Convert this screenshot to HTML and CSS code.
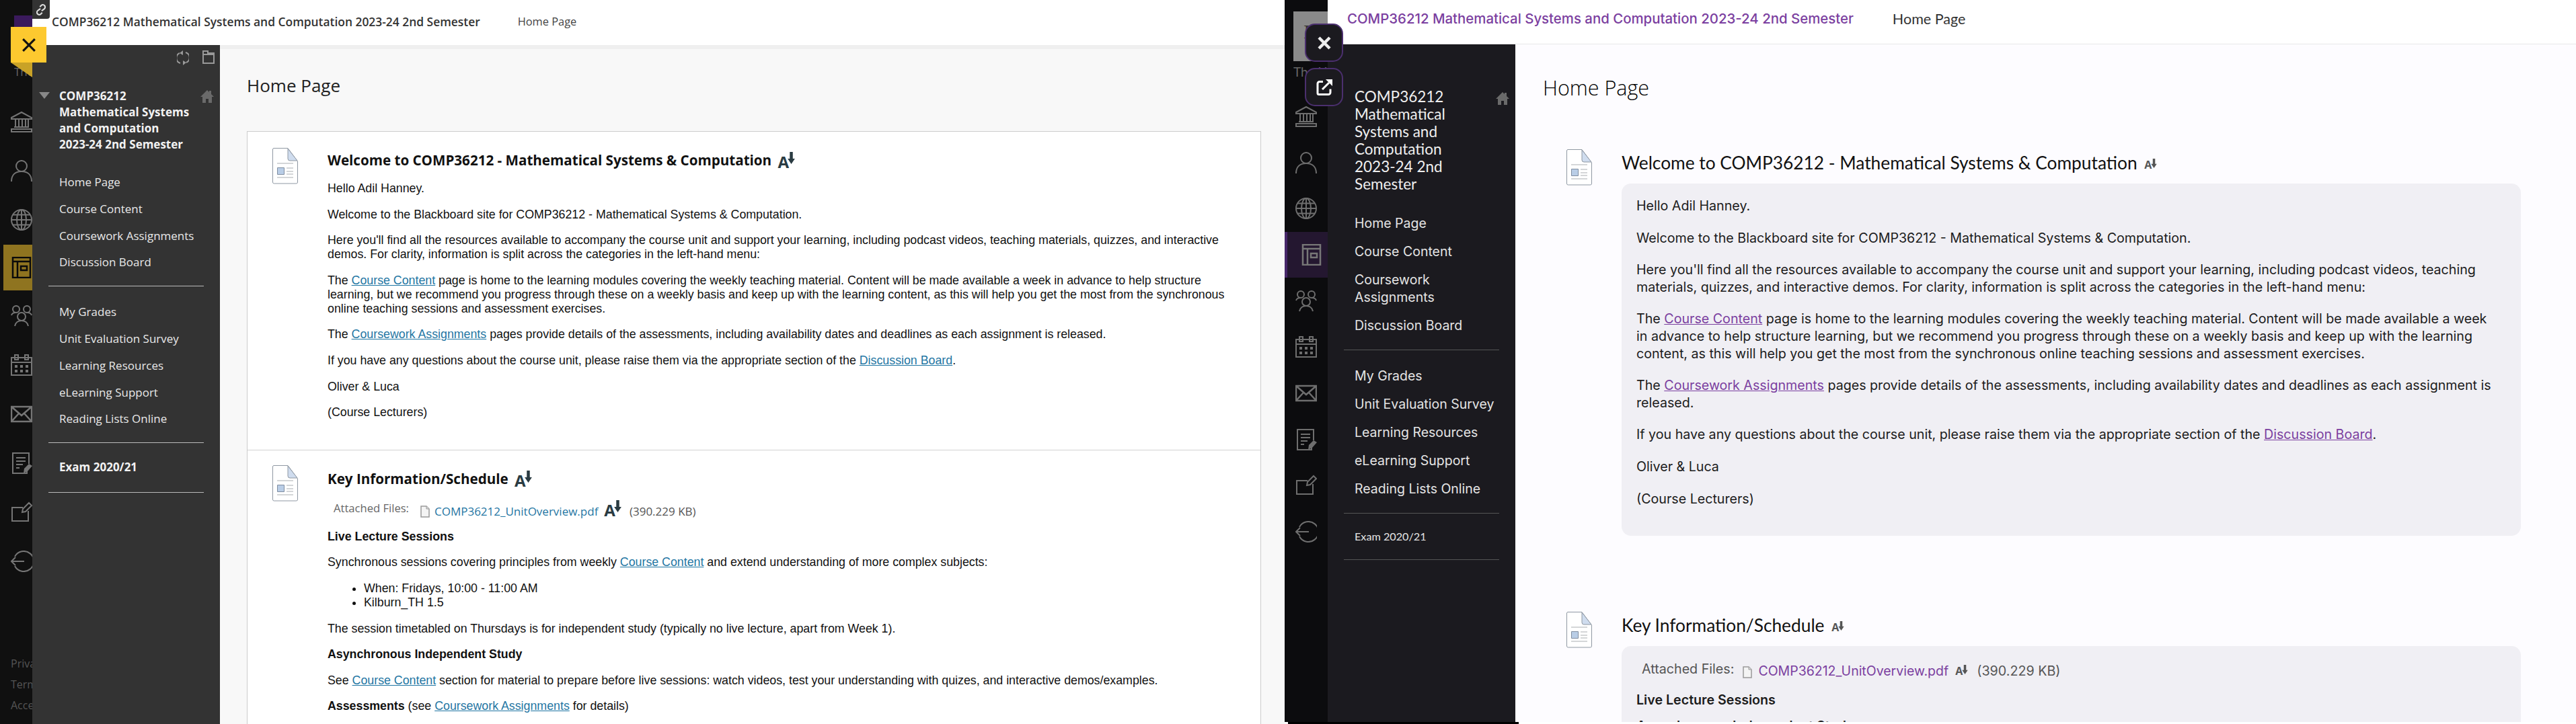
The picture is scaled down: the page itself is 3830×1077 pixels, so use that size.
FILE: index.html
```html
<!DOCTYPE html>
<html lang="en">
<head>
<meta charset="utf-8">
<title>COMP36212 Home Page</title>
<link rel="stylesheet" href="styles.css">
</head>
<body>
<svg class="sprite" xmlns="http://www.w3.org/2000/svg" aria-hidden="true">
  <symbol id="i-bank" viewBox="0 0 32 32"><path d="M1 10 16 2l15 8v2H1zM3 31h26M1 27h30v4H1zM5 24h22M7 13v10M12 13v10M17 13v10M22 13v10M26 13v10" fill="none" stroke="currentColor" stroke-width="2"/></symbol>
  <symbol id="i-person" viewBox="0 0 32 32"><circle cx="16" cy="9" r="8" fill="none" stroke="currentColor" stroke-width="2"/><path d="M1 32c0-10 6-15 15-15s15 5 15 15" fill="none" stroke="currentColor" stroke-width="2"/></symbol>
  <symbol id="i-globe" viewBox="0 0 32 32"><g fill="none" stroke="currentColor" stroke-width="2"><circle cx="16" cy="16" r="15"/><ellipse cx="16" cy="16" rx="7" ry="15"/><path d="M16 1v30M1 16h30M3 8.500h26M3 23.500h26"/></g></symbol>
  <symbol id="i-book" viewBox="0 0 32 32"><g fill="none" stroke="currentColor" stroke-width="2.500"><path d="M3 1h26v30H3zM3 7h26M10 7v24"/><path d="M15 14h9v6h-9z"/></g></symbol>
  <symbol id="i-group" viewBox="0 0 32 32"><g fill="none" stroke="currentColor" stroke-width="2"><circle cx="8" cy="6" r="5"/><circle cx="24" cy="6" r="5"/><circle cx="16" cy="17" r="6"/><path d="M1 15c1-3 3-4 6-4M31 15c-1-3-3-4-6-4M6 31c1-5 5-8 10-8s9 3 10 8"/></g></symbol>
  <symbol id="i-cal" viewBox="0 0 32 32"><g fill="none" stroke="currentColor" stroke-width="2"><path d="M1 5h30v26H1zM1 12h30M6 1h5v7H6zM21 1h5v7h-5z"/></g><path d="M6 16h4v4H6zM14 16h4v4h-4zM22 16h4v4h-4zM6 23h4v4H6zM14 23h4v4h-4zM22 23h4v4h-4z" fill="currentColor"/></symbol>
  <symbol id="i-mail" viewBox="0 0 32 32"><path d="M1 5h30v22H1zM1 5l15 13L31 5M1 27l11-12M31 27 20 15" fill="none" stroke="currentColor" stroke-width="2.500"/></symbol>
  <symbol id="i-note" viewBox="0 0 32 32"><path d="M24 22v9H3V1h24v16M8 8h14M8 13h14M8 18h10M8 23h5" fill="none" stroke="currentColor" stroke-width="2"/><path d="M19 31l1-7 7-7 5 3-7 8z" fill="currentColor"/></symbol>
  <symbol id="i-edit" viewBox="0 0 32 32"><path d="M26 14v15H2V9h16M17 16l1-5L27 2l4 4-9 9z" fill="none" stroke="currentColor" stroke-width="2"/></symbol>
  <symbol id="i-out" viewBox="0 0 32 32"><path d="M6 9a15 15 0 1 1 0 14M1 16h19M7 10l-6 6 6 6" fill="none" stroke="currentColor" stroke-width="2"/></symbol>
  <symbol id="i-home" viewBox="0 0 20 20"><path d="M10 1 0 11h3v9h5v-6h4v6h5v-9h3l-4-4V2h-3v2z" fill="currentColor"/></symbol>
  <symbol id="i-refresh" viewBox="0 0 18 22"><path d="M4 4a8 8 0 0 0 1 15M14 18a8 8 0 0 0-1-15" fill="none" stroke="currentColor" stroke-width="2"/><path d="M9 0v7L4 4zM9 22v-7l5 3z" fill="currentColor"/></symbol>
  <symbol id="i-folder" viewBox="0 0 18 20"><path d="M1 1h7v3h9v15H1zM1 6h16" fill="none" stroke="currentColor" stroke-width="2"/></symbol>
  <symbol id="i-page" viewBox="0 0 38 54">
    <path d="M2 .500h21L37.500 20v31a2 2 0 0 1-2 2H2.500a2 2 0 0 1-2-2V2a2 2 0 0 1 1.500-1.500z" fill="#fff" stroke="#8f98a3"/>
    <path d="M23 1v15a3 3 0 0 0 3 3h11z" fill="#cfdcee" stroke="#8f98a3"/>
    <path d="M7 23h24M7 44h24M21 30h10M21 35h10M21 39h10" stroke="#c6c9cc" stroke-width="1.500"/>
    <path d="M7.500 29.500h10v10h-10z" fill="#b9cde6" stroke="#7f8da0"/>
  </symbol>
  <symbol id="i-file" viewBox="0 0 14 18"><path d="M1 1h8l4 4v12H1z" fill="#f4f4f4" stroke="#999" stroke-width="1.500"/><path d="M9 1v4h4" fill="#ddd" stroke="#999"/></symbol>
  <symbol id="i-arrow" viewBox="0 0 12 20"><path d="M3.500 0h5v11H12l-6 9-6-9h3.500z" fill="currentColor"/></symbol>
  <symbol id="i-link" viewBox="0 0 16 22"><path d="M7 9 3 12a4 4 0 0 0 4 7l3-3M9 13l4-3a4 4 0 0 0-4-7L6 6" fill="none" stroke="currentColor" stroke-width="2.500"/></symbol>
  <symbol id="i-ext" viewBox="0 0 24 24"><path d="M10 3.500H5a3 3 0 0 0-3 3v14a2 2 0 0 0 2 2h14a3 3 0 0 0 3-3v-5" fill="none" stroke="currentColor" stroke-width="3"/><path d="M9 15 19 5" fill="none" stroke="currentColor" stroke-width="3"/><path d="M14 0h10v10z" fill="currentColor"/></symbol>
</svg>

<div class="screen">
  <section class="pane pane-left">
    <nav class="rail">
      <div class="rail-logo"></div>
      <div class="rail-caption">The University of Manchester</div>
      <div class="rail-icons">
        <div class="rail-item"><svg class="rail-ic"><use href="#i-bank"/></svg></div>
        <div class="rail-item"><svg class="rail-ic"><use href="#i-person"/></svg></div>
        <div class="rail-item"><svg class="rail-ic"><use href="#i-globe"/></svg></div>
        <div class="rail-item active"><svg class="rail-ic"><use href="#i-book"/></svg></div>
        <div class="rail-item"><svg class="rail-ic"><use href="#i-group"/></svg></div>
        <div class="rail-item"><svg class="rail-ic"><use href="#i-cal"/></svg></div>
        <div class="rail-item"><svg class="rail-ic"><use href="#i-mail"/></svg></div>
        <div class="rail-item"><svg class="rail-ic"><use href="#i-note"/></svg></div>
        <div class="rail-item"><svg class="rail-ic"><use href="#i-edit"/></svg></div>
        <div class="rail-item"><svg class="rail-ic"><use href="#i-out"/></svg></div>
      </div>
      <div class="rail-foot"><span>Privacy</span><span>Terms</span><span>Accessibility</span></div>
    </nav>
    <div class="body">
      <header class="bar">
        <span class="bar-title">COMP36212 Mathematical Systems and Computation 2023-24 2nd Semester</span>
        <span class="bar-crumb">Home Page</span>
      </header>
      <div class="row">
        <aside class="side">
          <div class="tools">
            <svg class="tool tool-a"><use href="#i-refresh"/></svg>
            <svg class="tool tool-b"><use href="#i-folder"/></svg>
          </div>
          <div class="course">
            <span class="caret"></span>
            <h2 class="course-name">COMP36212<br>Mathematical Systems<br>and Computation<br>2023-24 2nd Semester</h2>
            <svg class="home"><use href="#i-home"/></svg>
          </div>
          <ul class="menu first"><li>Home Page</li><li>Course Content</li><li>Coursework Assignments</li><li>Discussion Board</li></ul>
          <hr class="sep">
          <ul class="menu"><li>My Grades</li><li>Unit Evaluation Survey</li><li>Learning Resources</li><li>eLearning Support</li><li>Reading Lists Online</li></ul>
          <hr class="sep">
          <div class="exam">Exam 2020/21</div>
          <hr class="sep flush">
        </aside>
        <main class="main">
          <h1 class="page-title">Home Page</h1>
          <div class="card">
            <article class="sec sec-first">
              <svg class="page-ic"><use href="#i-page"/></svg>
              <div class="sec-body">
                <h3 class="sec-title">Welcome to COMP36212 - Mathematical Systems &amp; Computation <span class="aa"><span class="aa-a">A</span><svg class="aa-arrow"><use href="#i-arrow"/></svg></span></h3>
                <p>Hello Adil Hanney.</p>
                <p>Welcome to the Blackboard site for COMP36212 - Mathematical Systems &amp; Computation.</p>
                <p>Here you'll find all the resources available to accompany the course unit and support your learning, including podcast videos, teaching materials, quizzes, and interactive<br>demos. For clarity, information is split across the categories in the left-hand menu:</p>
                <p>The <a href="#">Course Content</a> page is home to the learning modules covering the weekly teaching material. Content will be made available a week in advance to help structure<br>learning, but we recommend you progress through these on a weekly basis and keep up with the learning content, as this will help you get the most from the synchronous<br>online teaching sessions and assessment exercises.</p>
                <p>The <a href="#">Coursework Assignments</a> pages provide details of the assessments, including availability dates and deadlines as each assignment is released.</p>
                <p>If you have any questions about the course unit, please raise them via the appropriate section of the <a href="#">Discussion Board</a>.</p>
                <p>Oliver &amp; Luca</p>
                <p>(Course Lecturers)</p>
              </div>
            </article>
            <article class="sec sec-next">
              <svg class="page-ic"><use href="#i-page"/></svg>
              <div class="sec-body">
                <h3 class="sec-title">Key Information/Schedule <span class="aa"><span class="aa-a">A</span><svg class="aa-arrow"><use href="#i-arrow"/></svg></span></h3>
                <div class="attach">
                  <span class="attach-label">Attached Files:</span>
                  <svg class="file-ic"><use href="#i-file"/></svg>
                  <a class="attach-link" href="#">COMP36212_UnitOverview.pdf</a>
                  <span class="aa"><span class="aa-a">A</span><svg class="aa-arrow"><use href="#i-arrow"/></svg></span>
                  <span class="attach-size">(390.229 KB)</span>
                </div>
                <p><b>Live Lecture Sessions</b></p>
                <p>Synchronous sessions covering principles from weekly <a href="#">Course Content</a> and extend understanding of more complex subjects:</p>
                <ul class="bullets"><li>When: Fridays, 10:00 - 11:00 AM</li><li>Kilburn_TH 1.5</li></ul>
                <p>The session timetabled on Thursdays is for independent study (typically no live lecture, apart from Week 1).</p>
                <p><b>Asynchronous Independent Study</b></p>
                <p>See <a href="#">Course Content</a> section for material to prepare before live sessions: watch videos, test your understanding with quizes, and interactive demos/examples.</p>
                <p><b>Assessments</b> (see <a href="#">Coursework Assignments</a> for details)</p>
              </div>
            </article>
          </div>
        </main>
      </div>
    </div>
    <div class="link-tab"><svg class="link-ic"><use href="#i-link"/></svg></div>
    <button class="close-y" type="button"><svg class="close-y-ic" viewBox="0 0 20 20"><path d="M2 2l16 16M18 2 2 18"/></svg></button>
  </section>

  <section class="pane pane-right">
    <div class="right-inner">
      <nav class="rail">
        <div class="rail-logo"><span class="logo-glyph">I</span></div>
        <div class="rail-caption">The University of Manchester</div>
        <div class="rail-icons">
          <div class="rail-item"><svg class="rail-ic"><use href="#i-bank"/></svg></div>
          <div class="rail-item"><svg class="rail-ic"><use href="#i-person"/></svg></div>
          <div class="rail-item"><svg class="rail-ic"><use href="#i-globe"/></svg></div>
          <div class="rail-item active"><svg class="rail-ic"><use href="#i-book"/></svg></div>
          <div class="rail-item"><svg class="rail-ic"><use href="#i-group"/></svg></div>
          <div class="rail-item"><svg class="rail-ic"><use href="#i-cal"/></svg></div>
          <div class="rail-item"><svg class="rail-ic"><use href="#i-mail"/></svg></div>
          <div class="rail-item"><svg class="rail-ic"><use href="#i-note"/></svg></div>
          <div class="rail-item"><svg class="rail-ic"><use href="#i-edit"/></svg></div>
          <div class="rail-item"><svg class="rail-ic"><use href="#i-out"/></svg></div>
        </div>
      </nav>
      <div class="body">
        <header class="bar">
          <span class="bar-title">COMP36212 Mathematical Systems and Computation 2023-24 2nd Semester</span>
          <span class="bar-crumb">Home Page</span>
        </header>
        <div class="row">
          <aside class="side">
            <div class="course">
              <h2 class="course-name">COMP36212<br>Mathematical<br>Systems and<br>Computation<br>2023-24 2nd<br>Semester</h2>
              <svg class="home"><use href="#i-home"/></svg>
            </div>
            <ul class="menu first"><li>Home Page</li><li>Course Content</li><li class="two">Coursework<br>Assignments</li><li>Discussion Board</li></ul>
            <hr class="sep">
            <ul class="menu"><li>My Grades</li><li>Unit Evaluation Survey</li><li>Learning Resources</li><li>eLearning Support</li><li>Reading Lists Online</li></ul>
            <hr class="sep">
            <div class="exam">Exam 2020/21</div>
            <hr class="sep flush">
          </aside>
          <main class="main">
            <h1 class="page-title">Home Page</h1>
            <article class="sec sec-first">
              <svg class="page-ic"><use href="#i-page"/></svg>
              <div class="sec-body">
                <h3 class="sec-title">Welcome to COMP36212 - Mathematical Systems &amp; Computation <span class="aa"><span class="aa-a">A</span><svg class="aa-arrow"><use href="#i-arrow"/></svg></span></h3>
                <div class="panel">
                  <p>Hello Adil Hanney.</p>
                  <p>Welcome to the Blackboard site for COMP36212 - Mathematical Systems &amp; Computation.</p>
                  <p>Here you'll find all the resources available to accompany the course unit and support your learning, including podcast videos, teaching<br>materials, quizzes, and interactive demos. For clarity, information is split across the categories in the left-hand menu:</p>
                  <p>The <a href="#">Course Content</a> page is home to the learning modules covering the weekly teaching material. Content will be made available a week<br>in advance to help structure learning, but we recommend you progress through these on a weekly basis and keep up with the learning<br>content, as this will help you get the most from the synchronous online teaching sessions and assessment exercises.</p>
                  <p>The <a href="#">Coursework Assignments</a> pages provide details of the assessments, including availability dates and deadlines as each assignment is<br>released.</p>
                  <p>If you have any questions about the course unit, please raise them via the appropriate section of the <a href="#">Discussion Board</a>.</p>
                  <p>Oliver &amp; Luca</p>
                  <p>(Course Lecturers)</p>
                </div>
              </div>
            </article>
            <article class="sec sec-next">
              <svg class="page-ic"><use href="#i-page"/></svg>
              <div class="sec-body">
                <h3 class="sec-title">Key Information/Schedule <span class="aa"><span class="aa-a">A</span><svg class="aa-arrow"><use href="#i-arrow"/></svg></span></h3>
                <div class="panel">
                  <div class="attach">
                    <span class="attach-label">Attached Files:</span>
                    <svg class="file-ic"><use href="#i-file"/></svg>
                    <a class="attach-link" href="#">COMP36212_UnitOverview.pdf</a>
                    <span class="aa"><span class="aa-a">A</span><svg class="aa-arrow"><use href="#i-arrow"/></svg></span>
                    <span class="attach-size">(390.229 KB)</span>
                  </div>
                  <p class="tight"><b>Live Lecture Sessions</b></p>
                  <p><b>Asynchronous Independent Study</b></p>
                </div>
              </div>
            </article>
          </main>
        </div>
      </div>
    </div>
    <div class="strip"><span class="strip-dark"></span></div>
    <button class="sq-btn sq-close" type="button"><svg class="sq-ic" viewBox="0 0 20 20"><path d="M2 2l16 16M18 2 2 18"/></svg></button>
    <button class="sq-btn sq-open" type="button"><svg class="sq-ext"><use href="#i-ext"/></svg></button>
  </section>
</div>
</body>
</html>
```
FILE: styles.css
```css
* { box-sizing: border-box; }
html, body { margin: 0; padding: 0; width: 3830px; height: 1077px; overflow: hidden; background: #fff; }
.sprite { position: absolute; width: 0; height: 0; }
.screen { display: flex; width: 3830px; height: 1077px; }
.pane { position: relative; height: 1077px; overflow: hidden; display: flex; }
ul { list-style: none; margin: 0; padding: 0; }
h1, h2, h3, p { margin: 0; font-weight: normal; }
hr { border: 0; margin: 0; }
button { border: 0; padding: 0; }

/* shared structure */
.rail { flex: none; display: flex; flex-direction: column; overflow: hidden; height: 100%; }
.rail-caption { white-space: nowrap; overflow: hidden; }
.rail-icons { display: flex; flex-direction: column; }
.rail-item { display: flex; align-items: center; flex: none; }
.rail-ic { width: 32px; height: 32px; display: block; flex: none; }
.body { flex: 1; min-width: 0; display: flex; flex-direction: column; height: 100%; }
.bar { flex: none; display: flex; align-items: center; background: #fff; white-space: nowrap; }
.row { flex: 1; display: flex; min-height: 0; }
.side { flex: none; width: 279px; height: 100%; }
.main { flex: 1; min-width: 0; overflow: hidden; }
.course { display: flex; position: relative; }
.sep { margin: 0 24px; height: 1px; }
.menu li { padding-left: 40px; white-space: nowrap; }
.exam { padding-left: 40px; }
.sec { display: flex; }
.sec-body { flex: 1; min-width: 0; }
.aa { display: inline-flex; align-items: flex-start; vertical-align: middle; }
.aa-arrow { display: block; }
.home { flex: none; }

/* left pane */
.pane-left { width: 1910px; font-family: "Liberation Sans", Arial, sans-serif; background: #f8f8f8; }
.pane-left .rail { width: 48px; background: #101010; padding: 23px 0 0 16px; }
.pane-left .rail-logo { width: 32px; height: 50px; background: #3a1a5c; flex: none; margin-left: 5px; }
.pane-left .rail-caption { margin: 24px 0 0 5px; font: 17px/20px "Open Sans", sans-serif; color: #666; height: 20px; flex: none; }
.pane-left .rail-icons { margin: 27.500px 0 0 -16px; }
.pane-left .rail-item { height: 73px; padding-left: 16px; color: #757575; }
.pane-left .rail-item.active { height: 68px; margin: 0 0 2px 5px; padding-left: 11px; background: #8f7420; color: #0b0b0b; }
.rail-foot { margin: auto 0 0 0; padding-bottom: 18px; display: flex; flex-direction: column; gap: 11px; font: 16px/20px "Open Sans", sans-serif; color: #555; white-space: nowrap; }
.pane-left .bar { height: 67px; padding: 0 0 4px 29px; }
.pane-left .bar-title { font: 600 17.400px/24px "Open Sans", sans-serif; color: #333; }
.pane-left .bar-crumb { margin-left: 56px; font: 16.400px/24px "Open Sans", sans-serif; color: #444; }
.pane-left .side { background: #333; color: #e8e8e8; font-family: "Open Sans", sans-serif; }
.tools { height: 64px; display: flex; align-items: flex-start; padding: 8px 0 0 215px; color: #999; }
.tool { display: block; }
.tool-a { width: 18px; height: 22px; }
.tool-b { width: 18px; height: 20px; margin-left: 20px; }
.pane-left .course { padding-left: 40px; }
.caret { position: absolute; left: 10px; top: 6px; width: 0; height: 0; border-left: 8px solid transparent; border-right: 8px solid transparent; border-top: 10px solid #888; }
.pane-left .course-name { font: 700 17px/24px "Open Sans", sans-serif; color: #f2f2f2; }
.pane-left .home { position: absolute; left: 250px; top: 2px; width: 20px; height: 20px; color: #6a6a6a; }
.pane-left .menu.first { margin-top: 24px; }
.pane-left .menu li { height: 39.800px; font-size: 17px; line-height: 40px; }
.pane-left .sep { background: #bbb; margin-top: 15px; margin-bottom: 18px; }
.pane-left .menu + .sep + .menu + .sep { margin-bottom: 16px; }
.pane-left .exam { font-weight: 700; font-size: 17px; line-height: 40px; height: 40px; color: #f2f2f2; }
.pane-left .sep.flush { margin-top: 17px; }
.pane-left .main { padding: 0 35px 0 40px; background: #f8f8f8; box-shadow: inset 0 7px 0 -1px #efefef; }
.pane-left .page-title { font: 26px/36px "Open Sans", sans-serif; color: #222; margin: 42px 0 0 0; height: 86px; }
.card { background: #fff; border: 1px solid #ccc; border-bottom: 0; height: 900px; }
.pane-left .sec { padding-left: 37px; }
.pane-left .sec-first { padding-top: 24px; padding-bottom: 27px; border-bottom: 1px solid #d2d2d2; }
.pane-left .sec-next { padding-top: 22px; }
.page-ic { flex: none; display: block; width: 38px; height: 54px; }
.pane-left .page-ic { margin-right: 44px; }
.pane-left .sec-title { font: 700 20.600px/30px "Open Sans", sans-serif; color: #111; margin: 3px 0 17px; }
.pane-left .sec-next .sec-title { margin: 5px 0 18px; }
.pane-left p { font-size: 17.800px; line-height: 21px; color: #111; margin-bottom: 17.600px; white-space: nowrap; }
.pane-left a { color: #1f76a3; }
.pane-left .aa { margin-left: 4px; color: #2a3b42; height: 22px; }
.pane-left .aa-a { font: 700 24px/28px "Open Sans", sans-serif; margin-top: -2px; }
.pane-left .aa-arrow { width: 13px; height: 18px; margin: -3px 0 0 -3px; }
.pane-left .attach { display: flex; align-items: center; height: 30px; margin: 0 0 13px 9px; white-space: nowrap; }
.pane-left .attach-label { font: 16.600px/24px "Open Sans", sans-serif; color: #666; margin-top: -7px; }
.pane-left .file-ic { width: 14px; height: 18px; margin: 3px 7px 0 17px; flex: none; }
.pane-left .attach-link { font: 17px/24px "Open Sans", sans-serif; text-decoration: none; margin-top: 3px; }
.pane-left .attach .aa { margin-left: 9px; margin-top: -3px; }
.pane-left .attach-size { font: 17px/24px "Open Sans", sans-serif; color: #555; margin: 3px 0 0 11px; }
.pane-left .bullets { list-style: disc; padding-left: 54px; margin-bottom: 17.600px; font-size: 17.800px; line-height: 21px; color: #111; }

/* link tab and yellow close */
.link-tab { position: absolute; left: 48px; top: 0; width: 26px; height: 28px; background: #333; border-radius: 0 0 4px 0; display: flex; align-items: center; justify-content: center; color: #ddd; }
.link-ic { width: 14px; height: 19px; }
.close-y { position: absolute; left: 16px; top: 40px; width: 53px; height: 53px; background: #fdc92f; display: flex; align-items: center; justify-content: center; }
.close-y::after { content: ""; position: absolute; left: 0; top: 53px; width: 32px; height: 22px; background: #c9a227; clip-path: polygon(0 0, 100% 0, 100% 100%); }
.close-y-ic { width: 22px; height: 22px; fill: none; stroke: #111; stroke-width: 2.800; }

/* right pane */
.pane-right { width: 1920px; flex-direction: column; font-family: Inter, sans-serif; background: #fff; }
.right-inner { display: flex; height: 1074px; flex: none; overflow: hidden; }
.strip { height: 3px; flex: none; background: #fff; display: flex; }
.strip-dark { margin-left: 5px; width: 343px; background: #000; }
.pane-right .rail { width: 64px; background: #0c0c0e; padding: 17px 0 0 13px; }
.pane-right .rail-logo { width: 51px; height: 74px; background: #8a8a8a; flex: none; position: relative; overflow: hidden; }
.logo-glyph { display: block; padding: 12px 0 0 15px; font: 30px/36px "Liberation Serif", serif; color: #333; }
.pane-right .rail-caption { margin-top: 4px; font: 19px/24px Lato, sans-serif; color: #666; height: 24px; flex: none; }
.pane-right .rail-icons { margin: 19.500px 0 0 -13px; }
.pane-right .rail-item { height: 68.700px; padding-left: 16px; color: #6e6e6e; }
.pane-right .rail-item.active { height: 68px; margin: 0 0 .7px 0; padding-left: 20px; background: #241730; border-left: 4px solid #47276a; color: #777; }
.pane-right .bar { height: 65px; padding: 0 0 9px 29px; box-shadow: 0 1px 0 #e8e8e8; position: relative; }
.pane-right .bar-title { font: 500 20.400px/28px Inter, sans-serif; color: #7b3fa0; }
.pane-right .bar-crumb { margin-left: 58px; font: 21.500px/28px Lato, sans-serif; color: #333; }
.pane-right .side { background: #1b1a1f; color: #e4e4e4; }
.pane-right .course { padding: 66px 0 0 40px; }
.pane-right .course-name { font: 400 22.500px/26px Lato, sans-serif; color: #efefef; }
.pane-right .home { position: absolute; left: 250px; top: 71px; width: 20px; height: 20px; color: #6a6a6a; }
.pane-right .menu.first { margin-top: 24px; }
.pane-right .menu li { height: 42px; font-size: 19.500px; line-height: 42px; }
.pane-right .menu li.two { height: 68px; line-height: 26px; padding-top: 8px; }
.pane-right .sep { background: #555; margin-top: 15px; margin-bottom: 17px; }
.pane-right .menu + .sep + .menu + .sep { margin-bottom: 16px; }
.pane-right .exam { font: 16.200px/36px Lato, sans-serif; height: 36px; }
.pane-right .sep.flush { margin-top: 16px; }
.pane-right .main { padding: 0 82px 0 76px; background: #fdfcff; }
.pane-right .page-title { font: 300 30.500px/40px "Open Sans", sans-serif; color: #000; margin: 45px 0 0 -35px; height: 112px; }
.pane-right .page-ic { margin-right: 44px; }
.pane-right .sec-title { font: 400 26.300px/40px Lato, sans-serif; color: #111; margin-bottom: 11px; }
.pane-right .sec-next { margin-top: 113px; }
.panel { background: #f0eff4; border-radius: 14px; padding: 21px 22px 20px; }
.pane-right p { font-size: 19.650px; line-height: 25.600px; color: #1c1c1c; margin-bottom: 22px; white-space: nowrap; }
.pane-right p.tight { margin-bottom: 13px; }
.pane-right b { font-weight: 600; }
.pane-right a { color: #7b3fa0; }
.pane-right .aa { margin-left: 4px; color: #555; }
.pane-right .aa-a { font: 700 16px/18px "Open Sans", sans-serif; }
.pane-right .aa-arrow { width: 9px; height: 14px; margin-left: -1px; }
.pane-right .attach { display: flex; align-items: center; height: 32px; margin: 0 0 15px 8px; white-space: nowrap; }
.pane-right .attach-label { font: 19.700px/24px Inter, sans-serif; color: #555; margin-top: -6px; }
.pane-right .file-ic { width: 14px; height: 18px; margin: 3px 9px 0 13px; flex: none; }
.pane-right .attach-link { font: 19.500px/24px Inter, sans-serif; text-decoration: none; }
.pane-right .attach .aa { margin-left: 10px; }
.pane-right .attach-size { font: 19.700px/24px Inter, sans-serif; color: #555; margin-left: 13px; }

.sq-btn { position: absolute; left: 30px; width: 57px; height: 57px; background: #1b1a1f; border: 2px solid #4b2f6e; border-radius: 15px; display: flex; align-items: center; justify-content: center; }
.sq-close { top: 35px; }
.sq-open { top: 101px; }
.sq-ic { width: 20px; height: 20px; fill: none; stroke: #eee; stroke-width: 4.500; }
.sq-ext { width: 24px; height: 24px; color: #fff; }
```
